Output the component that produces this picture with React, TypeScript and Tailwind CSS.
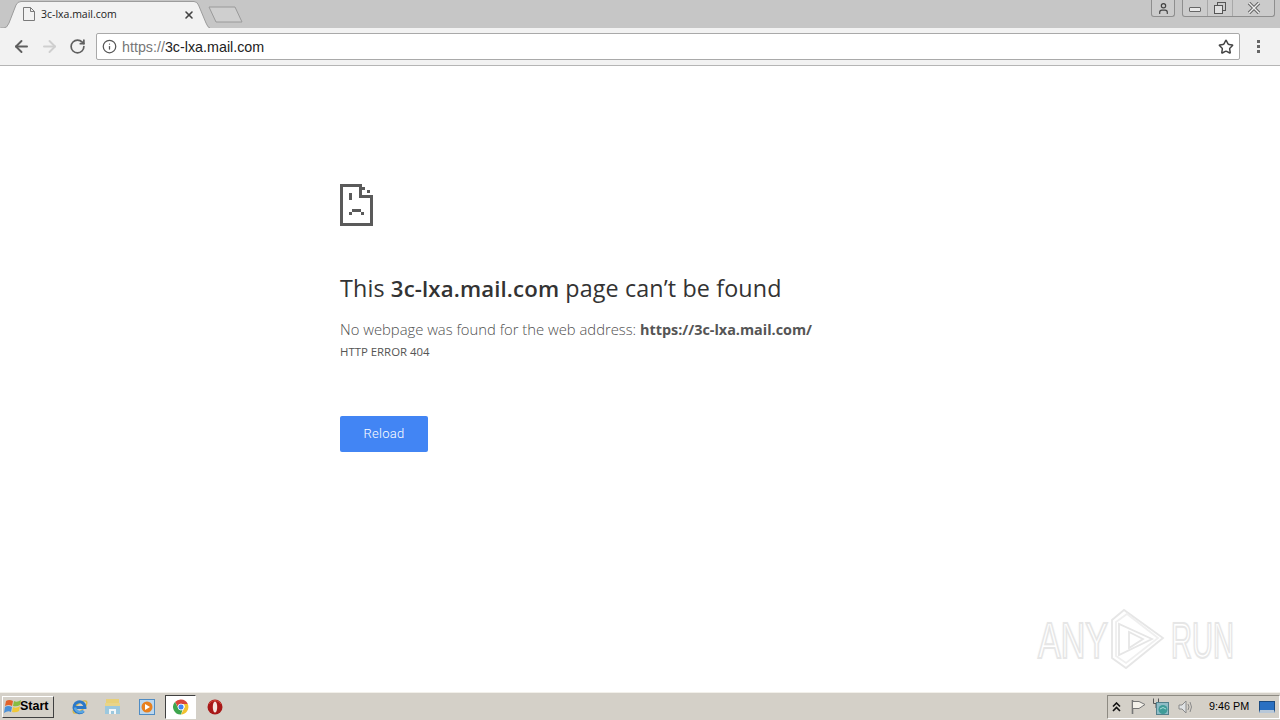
import { ArrowLeft, ArrowRight, RotateCw, Star, Info, X, User } from "lucide-react"

const ui = "font-['Open_Sans',sans-serif]"

function SadPage() {
  return (
    <svg width="34" height="42" viewBox="0 0 34 42" className="block" shapeRendering="crispEdges">
      <g fill="#5a5a5a">
        <rect x="0" y="0" width="22" height="3" />
        <rect x="0" y="0" width="3" height="42" />
        <rect x="0" y="39" width="33" height="3" />
        <rect x="30" y="11" width="3" height="31" />
        <rect x="19" y="0" width="3" height="14" />
        <rect x="19" y="11" width="14" height="3" />
        <rect x="22" y="3" width="3" height="3" />
        <rect x="27" y="6" width="3" height="3" />
        <rect x="9" y="9" width="3" height="7" />
        <rect x="12" y="25" width="9" height="3" />
        <rect x="9" y="28" width="3" height="3" />
        <rect x="21" y="28" width="3" height="3" />
      </g>
    </svg>
  )
}

function WinFlag() {
  return (
    <svg width="17" height="17" viewBox="0 0 17 17">
      <path d="M2 3 Q5 1 9 3 L8 8 Q5 6 1 8Z" fill="#e2622a" />
      <path d="M10 3 Q13 5 17 2 L16 7 Q13 9 9 8Z" fill="#86bc42" />
      <path d="M1 9 Q4 7 8 9 L7 14 Q4 12 0 15Z" fill="#4a90d8" />
      <path d="M9 9 Q12 11 16 8 L15 13 Q12 15 8 14Z" fill="#f0c838" />
    </svg>
  )
}

function IEIcon() {
  return (
    <svg width="18" height="18" viewBox="0 0 18 18" fill="none">
      <ellipse cx="9" cy="9" rx="8.5" ry="3.6" stroke="#d8b848" strokeWidth="1.4" transform="rotate(-40 9 9)" />
      <path d="M4 9.5 H14 A5.5 5.5 0 1 0 12.6 13" stroke="#2b78c8" strokeWidth="3" />
      <path d="M4 9.5 A5.5 5.5 0 0 0 12.6 13" stroke="#5aa6e2" strokeWidth="2.4" />
    </svg>
  )
}

function FolderIcon() {
  return (
    <svg width="16" height="17" viewBox="0 0 16 17">
      <rect x="1" y="1" width="13" height="5" fill="#e8d078" />
      <rect x="0" y="5" width="15" height="11" fill="#9cc8de" />
      <rect x="0" y="5" width="15" height="3" fill="#e9d488" />
      <path d="M4 16 V11 H11 V16 H9 V13 H6 V16Z" fill="#f2f6f8" />
    </svg>
  )
}

function MediaIcon() {
  return (
    <svg width="16" height="16" viewBox="0 0 16 16">
      <rect x="0.5" y="0.5" width="15" height="15" fill="#bcd7ee" stroke="#4f8cc4" />
      <circle cx="8" cy="8" r="5.5" fill="#e8801e" />
      <path d="M6 5 L11 8 L6 11Z" fill="#fff" />
    </svg>
  )
}

function ChromeIcon() {
  return (
    <svg width="16" height="16" viewBox="0 0 16 16">
      <path d="M8 0.5 A7.5 7.5 0 0 1 14.8 5 H8 A3 3 0 0 0 5 8 L2 3 A7.5 7.5 0 0 1 8 0.5Z" fill="#d9463a" />
      <path d="M14.8 5 A7.5 7.5 0 0 1 8 15.5 L11 9.5 A3 3 0 0 0 10.5 5Z" fill="#f2c230" />
      <path d="M8 15.5 A7.5 7.5 0 0 1 2 3 L5.5 9.5 A3 3 0 0 0 9.5 10.8Z" fill="#3ea54e" />
      <circle cx="8" cy="8" r="3" fill="#4285f4" stroke="#fff" strokeWidth="0.8" />
    </svg>
  )
}

function OperaIcon() {
  return (
    <svg width="16" height="16" viewBox="0 0 16 16">
      <circle cx="8" cy="8" r="7.5" fill="#a81818" />
      <path d="M2 5 A7 7 0 0 1 14 5" stroke="#d84a3c" fill="none" />
      <ellipse cx="8" cy="8" rx="2.2" ry="5.5" fill="#f5e6e0" />
    </svg>
  )
}

function NetworkIcon() {
  return (
    <svg width="18" height="18" viewBox="0 0 18 18">
      <path d="M1.5 0.5 V5.5 H6.5 V0.5 M4 5.5 V10" fill="none" stroke="#555" />
      <rect x="4.5" y="4.5" width="12" height="12" fill="#8fbcc6" stroke="#52808c" />
      <circle cx="11" cy="11.5" r="4.5" fill="#3f9c98" />
      <path d="M8 11 Q11 8 14 11" fill="none" stroke="#a8dcd8" />
    </svg>
  )
}

function FlagIcon() {
  return (
    <svg width="16" height="16" viewBox="0 0 16 16" fill="none" stroke="#777">
      <path d="M2.5 1 V15" strokeWidth="1.6" />
      <path d="M3 2.5 H9 L15 5.5 L9 9.5 H3" fill="#f4f1ea" />
    </svg>
  )
}

function SpeakerIcon() {
  return (
    <svg width="16" height="16" viewBox="0 0 16 16" fill="none" stroke="#8a8a8a">
      <path d="M1 6 H4 L8 2 V14 L4 10 H1Z" fill="#dfe2e4" />
      <path d="M10 5 Q12 8 10 11" />
      <path d="M12 3 Q15 8 12 13" />
    </svg>
  )
}

function Watermark() {
  return (
    <div className="absolute left-[1038px] top-[608px] flex items-center pointer-events-none">
      <span className="font-['Liberation_Sans',sans-serif] text-[50px] leading-none text-white [-webkit-text-stroke:2px_#e6e6e6] [text-shadow:0_0_3px_#ececec] scale-x-[0.68] origin-left w-[70px] mt-[4px]">ANY</span>
      <svg width="62" height="62" viewBox="0 0 62 62" fill="none" stroke="#e6e6e6" strokeWidth="1.8" className="-ml-[1px]">
        <path d="M5 12 L17 2 L56 30 L19 60 L5 50Z" />
        <path d="M9 14 L20 6 L51 30 L19 55 L9 48Z" stroke="#efefef" />
        <path d="M12 16 L12 47 L45 31Z" />
        <path d="M22 24 L22 40 L36 31Z" />
      </svg>
      <span className="font-['Liberation_Sans',sans-serif] text-[50px] leading-none text-white [-webkit-text-stroke:2px_#e6e6e6] [text-shadow:0_0_3px_#ececec] scale-x-[0.58] origin-left w-[66px] ml-[2px] mt-[4px]">RUN</span>
    </div>
  )
}

export default function App() {
  return (
    <div className={`relative w-[1280px] h-[720px] overflow-hidden flex flex-col bg-white ${ui}`}>
      {/* tab strip */}
      <div className="h-[28px] bg-[#c6c6c6] flex relative">
        <div className="relative w-[210px] h-[28px] flex items-center pl-[23px] pr-[15px]">
          <svg width="210" height="28" viewBox="0 0 210 28" className="absolute left-0 top-0">
            <path d="M0.5 28 L4 28 Q7 28 9 23 L16 5 Q17.5 1.5 21 1.5 L194 1.5 Q197 1.5 198.5 5 L206 23 Q208 28 210 28" fill="#f2f2f2" stroke="#9c9c9c" />
          </svg>
          <svg width="12" height="14" viewBox="0 0 12 14" fill="none" stroke="#7a7a7a" className="relative">
            <path d="M0.5 0.5 H7.5 L11.5 4.5 V13.5 H0.5Z M7.5 0.5 V4.5 H11.5" />
          </svg>
          <span className="relative ml-[6px] text-[10.5px] text-[#222] flex-1 leading-none whitespace-nowrap">3c-lxa.mail.com</span>
          <X size={12} strokeWidth={3.2} className="relative text-[#444] mt-[2px]" />
        </div>
        <svg width="36" height="18" viewBox="0 0 36 18" className="mt-[6px] -ml-[2px]">
          <path d="M1 1 H27 L34 16 H8Z" fill="#cfcfcf" stroke="#9a9a9a" />
        </svg>
        {/* window controls */}
        <div className="absolute right-[5px] top-0 flex gap-[7px]">
          <div className="w-[24px] h-[17px] border border-t-0 border-[#8e8e8e] rounded-b-[3px] bg-[#cbcbcb] flex items-center justify-center">
            <User size={13} strokeWidth={2.2} className="text-[#444]" />
          </div>
          <div className="flex h-[17px] border border-t-0 border-[#8e8e8e] rounded-b-[3px] bg-[#cbcbcb]">
            <div className="w-[25px] flex items-center justify-center border-r border-[#a8a8a8]">
              <div className="w-[12px] h-[5px] border border-[#666] rounded-[1px] bg-[#e8e8e8] mt-[2px]" />
            </div>
            <div className="w-[25px] flex items-center justify-center border-r border-[#a8a8a8]">
              <svg width="12" height="12" viewBox="0 0 12 12" fill="none" stroke="#555">
                <rect x="3.5" y="0.5" width="8" height="8" />
                <rect x="0.5" y="3.5" width="8" height="8" fill="#e0e0e0" />
              </svg>
            </div>
            <div className="w-[41px] flex items-center justify-center">
              <svg width="14" height="12" viewBox="0 0 14 12" fill="none">
                <path d="M2 1 L12 11 M12 1 L2 11" stroke="#666" strokeWidth="3.4" />
                <path d="M2 1 L12 11 M12 1 L2 11" stroke="#eeeeee" strokeWidth="1.4" />
              </svg>
            </div>
          </div>
        </div>
      </div>

      {/* toolbar */}
      <div className="h-[38px] bg-[#f2f2f2] border-b border-[#b5b5b5] flex items-center pl-[12px] pr-[14px]">
        <ArrowLeft size={19} strokeWidth={2.4} className="text-[#5f5f5f]" />
        <ArrowRight size={19} strokeWidth={2.4} className="text-[#cfcfcf] ml-[9px]" />
        <RotateCw size={17} strokeWidth={2.4} className="text-[#5f5f5f] ml-[10px]" />
        <div className="ml-[10px] h-[27px] w-[1144px] border border-[#a9a9a9] rounded-[2px] bg-white flex items-center pl-[5px] pr-[5px]">
          <Info size={15} strokeWidth={2} className="text-[#555]" />
          <span className="ml-[5px] mt-[2px] text-[14.3px] leading-none flex-1 font-['Liberation_Sans',sans-serif]">
            <span className="text-[#777]">https://</span>
            <span className="text-[#222]">3c-lxa.mail.com</span>
          </span>
          <Star size={16} strokeWidth={2.2} className="text-[#444]" />
        </div>
        <div className="ml-[17px] flex flex-col gap-[2px]">
          <div className="w-[3px] h-[3px] bg-[#666]" />
          <div className="w-[3px] h-[3px] bg-[#666]" />
          <div className="w-[3px] h-[3px] bg-[#666]" />
        </div>
      </div>

      {/* error page */}
      <div className="flex-1 pl-[340px] pt-[118px]">
        <SadPage />
        <h1 className="mt-[44px] text-[23.3px] leading-[36px] tracking-[0.13px] text-[#333] font-normal whitespace-nowrap">
          This <strong className="text-[22.2px] font-semibold">3c-lxa.mail.com</strong> page can’t be found
        </h1>
        <p className="mt-[12px] text-[14.8px] leading-[20px] text-[#4f4f4f] font-light whitespace-nowrap">
          No webpage was found for the web address: <strong className="text-[14.4px] font-bold text-[#555]">https://3c-lxa.mail.com/</strong>
        </p>
        <p className="mt-[4px] text-[11.4px] leading-[16px] text-[#555]">HTTP ERROR 404</p>
        <button className="mt-[56px] w-[88px] h-[36px] rounded-[2px] bg-[#4285f4] text-white text-[13px] font-light font-['Roboto',sans-serif] tracking-[0.3px] block">Reload</button>
      </div>

      {/* taskbar */}
      <div className="h-[28px] bg-[#d4d0c8] border-t border-[#f2f0ea] flex items-center pl-[2px]">
        <div className="w-[52px] h-[22px] border border-t-white border-l-white border-r-[#404040] border-b-[#404040] bg-[#d4d0c8] flex items-center pl-[1px]">
          <WinFlag />
          <span className="-ml-[1px] font-['Liberation_Sans',sans-serif] font-bold text-[12.5px] leading-none text-black">Start</span>
        </div>
        <div className="ml-[17px] flex items-center">
          <div className="w-[18px] flex justify-center"><IEIcon /></div>
          <div className="w-[16px] ml-[16px] flex justify-center"><FolderIcon /></div>
          <div className="w-[16px] ml-[18px] flex justify-center"><MediaIcon /></div>
          <div className="ml-[10px] w-[31px] h-[24px] bg-white border border-t-[#404040] border-l-[#404040] border-r-white border-b-white flex items-center justify-center"><ChromeIcon /></div>
          <div className="ml-[11px]"><OperaIcon /></div>
        </div>
        <div className="ml-auto h-[24px] w-[173px] border border-t-[#8d8a82] border-l-[#8d8a82] border-r-white border-b-white flex items-center pl-[4px]">
          <svg width="9" height="10" viewBox="0 0 9 10" fill="none" stroke="#111" strokeWidth="1.6">
            <path d="M1 4.5 L4.5 1 L8 4.5 M1 9 L4.5 5.5 L8 9" />
          </svg>
          <div className="ml-[9px]"><FlagIcon /></div>
          <div className="ml-[6px]"><NetworkIcon /></div>
          <div className="ml-[8px]"><SpeakerIcon /></div>
          <span className="ml-[15px] text-[10.8px] leading-none text-black font-['Liberation_Sans',sans-serif] whitespace-nowrap">9:46 PM</span>
          <div className="ml-[10px] w-[16px] h-[12px] bg-[#2a70c2] border border-[#1a4a80] border-b-[3px] border-b-[#b8c8d8]" />
        </div>
      </div>

      <Watermark />
    </div>
  )
}
